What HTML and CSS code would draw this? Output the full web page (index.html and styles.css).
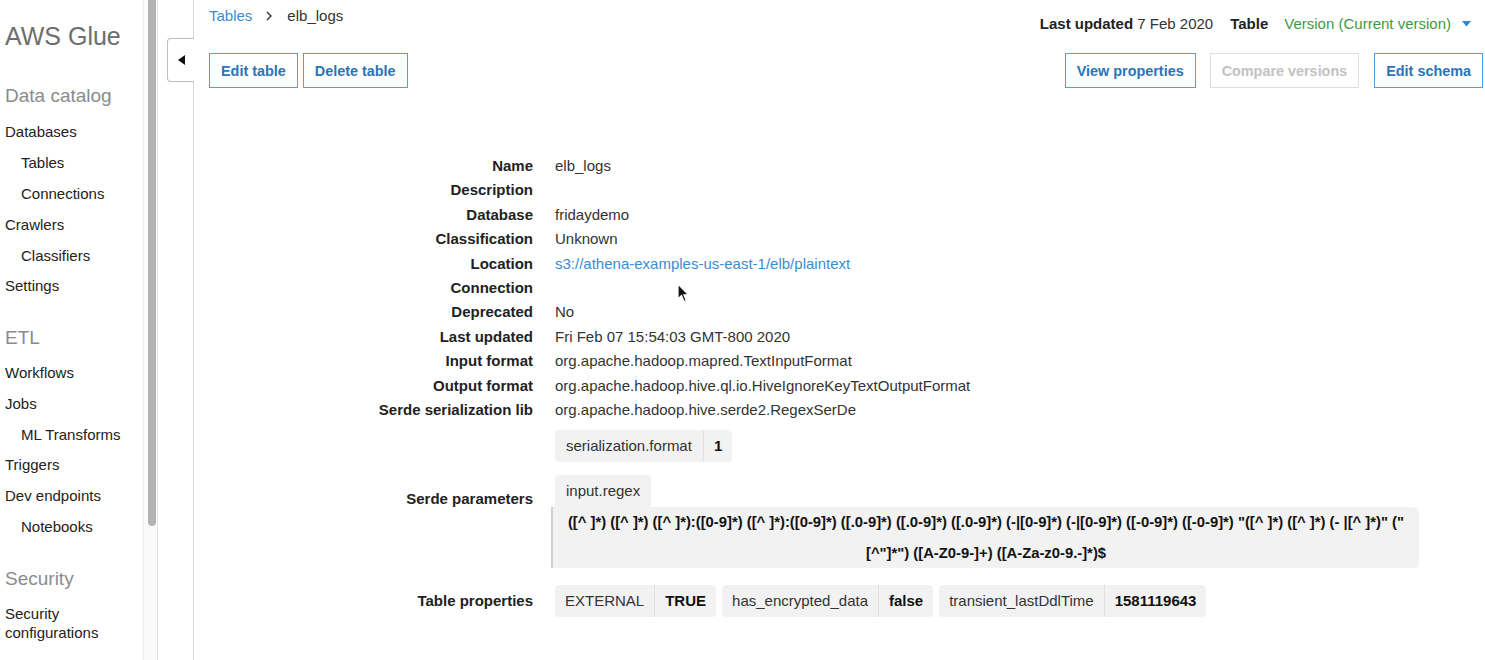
FILE: index.html
```html
<!DOCTYPE html>
<html lang="en">
<head>
<meta charset="utf-8">
<title>AWS Glue - elb_logs</title>
<link rel="stylesheet" href="styles.css">
</head>
<body>
<div class="app">
  <aside class="sidebar">
    <nav class="nav">
      <div class="brand">AWS Glue</div>
      <div class="section first">Data catalog</div>
      <a class="item">Databases</a>
      <a class="item sub">Tables</a>
      <a class="item sub">Connections</a>
      <a class="item">Crawlers</a>
      <a class="item sub">Classifiers</a>
      <a class="item">Settings</a>
      <div class="section etl">ETL</div>
      <a class="item">Workflows</a>
      <a class="item">Jobs</a>
      <a class="item sub">ML Transforms</a>
      <a class="item">Triggers</a>
      <a class="item">Dev endpoints</a>
      <a class="item sub">Notebooks</a>
      <div class="section sec">Security</div>
      <a class="item">Security configurations</a>
    </nav>
    <div class="scrollbar"><div class="thumb"></div></div>
  </aside>
  <div class="gutter">
    <button class="collapse" aria-label="Collapse">
      <svg width="8" height="10" viewBox="0 0 8 10"><path d="M7 0 L7 10 L0 5 Z" fill="#111"/></svg>
    </button>
  </div>
  <main class="main">
    <header class="top">
      <div class="crumbs">
        <a class="crumb-link">Tables</a>
        <svg class="chev" width="8" height="10" viewBox="0 0 8 10"><path d="M2 1 L6 5 L2 9" fill="none" stroke="#333" stroke-width="1.4"/></svg>
        <span class="crumb-current">elb_logs</span>
      </div>
      <div class="meta">
        <span class="meta-updated"><b>Last updated</b> 7 Feb 2020</span>
        <b class="meta-table">Table</b>
        <span class="version">Version (Current version)</span>
        <svg class="caret" width="9" height="6" viewBox="0 0 9 6"><path d="M0 0 L9 0 L4.5 5.5 Z" fill="#2f86d2"/></svg>
      </div>
    </header>
    <div class="actions">
      <div class="btn-group left">
        <button class="btn">Edit table</button>
        <button class="btn">Delete table</button>
      </div>
      <div class="btn-group right">
        <button class="btn">View properties</button>
        <button class="btn disabled">Compare versions</button>
        <button class="btn">Edit schema</button>
      </div>
    </div>
    <dl class="details">
      <dt>Name</dt><dd>elb_logs</dd>
      <dt>Description</dt><dd></dd>
      <dt>Database</dt><dd>fridaydemo</dd>
      <dt>Classification</dt><dd>Unknown</dd>
      <dt>Location</dt><dd><a class="link">s3://athena-examples-us-east-1/elb/plaintext</a></dd>
      <dt>Connection</dt><dd></dd>
      <dt>Deprecated</dt><dd>No</dd>
      <dt>Last updated</dt><dd>Fri Feb 07 15:54:03 GMT-800 2020</dd>
      <dt>Input format</dt><dd>org.apache.hadoop.mapred.TextInputFormat</dd>
      <dt>Output format</dt><dd>org.apache.hadoop.hive.ql.io.HiveIgnoreKeyTextOutputFormat</dd>
      <dt>Serde serialization lib</dt><dd>org.apache.hadoop.hive.serde2.RegexSerDe</dd>
      <dt class="params-label">Serde parameters</dt>
      <dd class="params">
        <div class="chips"><span class="chip"><span class="k">serialization.format</span><span class="v">1</span></span></div>
        <div class="regex-param">
          <span class="regex-key">input.regex</span>
          <div class="regex-val">([^ ]*) ([^ ]*) ([^ ]*):([0-9]*) ([^ ]*):([0-9]*) ([.0-9]*) ([.0-9]*) ([.0-9]*) (-|[0-9]*) (-|[0-9]*) ([-0-9]*) ([-0-9]*) "([^ ]*) ([^ ]*) (- |[^ ]*)" ("<br>[^"]*") ([A-Z0-9-]+) ([A-Za-z0-9.-]*)$</div>
        </div>
      </dd>
      <dt class="props-label">Table properties</dt>
      <dd class="props">
        <div class="chips">
          <span class="chip"><span class="k">EXTERNAL</span><span class="v">TRUE</span></span>
          <span class="chip"><span class="k">has_encrypted_data</span><span class="v">false</span></span>
          <span class="chip"><span class="k">transient_lastDdlTime</span><span class="v">1581119643</span></span>
        </div>
      </dd>
    </dl>
    <svg class="cursor" width="13" height="20" viewBox="0 0 13 20"><path d="M1 1 L1 16 L4.5 12.5 L7 18.5 L9.3 17.5 L6.8 11.8 L11.5 11.8 Z" fill="#111" stroke="#fff" stroke-width="1.2" stroke-linejoin="round"/></svg>
  </main>
</div>
</body>
</html>
```

FILE: styles.css
```css
* { box-sizing: border-box; }
html, body { margin: 0; padding: 0; }
body {
  font-family: "Liberation Sans", Arial, Helvetica, sans-serif;
  color: #333;
  background: #fff;
  overflow: hidden;
}
a { cursor: pointer; }
button { font-family: inherit; }

.app {
  display: flex;
  height: 660px;
  overflow: hidden;
}

/* Sidebar */
.sidebar {
  display: flex;
  flex: 0 0 158px;
  height: 100%;
}
.nav {
  width: 143px;
  padding: 20px 0 0 5px;
  display: flex;
  flex-direction: column;
}
.brand {
  font-size: 25px;
  line-height: 32px;
  color: #6e6e6e;
}
.section {
  font-size: 19px;
  line-height: 24px;
  color: #8b8b8b;
  margin: 24.5px 0 8.5px;
}
.section.first { margin-top: 32px; }
.section.etl { margin-bottom: 7.5px; }
.section.sec { margin-top: 25px; margin-bottom: 7.5px; }
.item {
  font-size: 15px;
  line-height: 19px;
  padding: 5.9px 0;
  color: #222;
}
.item.sub { padding-left: 16px; }

.scrollbar {
  width: 15px;
  height: 100%;
  border-left: 1px solid #ececec;
  border-right: 1px solid #e4e4e4;
  padding: 0 1px 0 4px;
  background: #fafafa;
}
.thumb {
  width: 8px;
  height: 526px;
  background: #b3b3b3;
  border-radius: 0 0 4px 4px;
}

/* Gutter with collapse tab */
.gutter {
  flex: 0 0 36px;
  border-right: 1px solid #d6d6d6;
  padding-top: 38px;
  display: flex;
  justify-content: flex-end;
}
.collapse {
  width: 27px;
  height: 44px;
  margin-right: -1px;
  background: #fff;
  border: 1px solid #bdbdbd;
  border-right: none;
  border-radius: 4px 0 0 4px;
  padding: 0 0 0 10px;
  display: flex;
  align-items: center;
}

/* Main */
.main {
  position: relative;
  flex: 1;
  padding: 0 2px 0 15px;
}
.top {
  display: flex;
  justify-content: space-between;
  align-items: flex-start;
  height: 34px;
}
.crumbs {
  padding-top: 6px;
  font-size: 15px;
  line-height: 20px;
  display: flex;
  align-items: center;
}
.crumb-link { color: #3d8ccd; }
.chev { margin: 0 14px 0 13px; }
.crumb-current { color: #333; }
.meta {
  padding-top: 14px;
  margin-right: 12px;
  font-size: 15px;
  line-height: 20px;
  color: #333;
  display: flex;
  align-items: center;
}
.meta b { color: #222; }
.meta-table { margin-left: 17px; }
.version { color: #3c9a45; margin-left: 16px; }
.caret { margin-left: 11px; }

.actions {
  margin-top: 19px;
  display: flex;
  justify-content: space-between;
}
.btn-group { display: flex; }
.btn-group.left { gap: 5px; }
.btn-group.right { gap: 15px; }
.btn-group.right .btn.disabled { margin-left: -1px; }
.btn {
  height: 35px;
  padding: 0 11px;
  background: #fff;
  border: 1px solid #5a9ed8;
  color: #2a74b8;
  font-size: 14.4px;
  font-weight: 700;
  border-radius: 0;
}
.btn.disabled {
  border-color: #dedede;
  color: #c2c2c2;
}

/* Details */
.details {
  margin: 66px 0 0;
  display: grid;
  grid-template-columns: 324px 1fr;
  column-gap: 22px;
  font-size: 15px;
  line-height: 24.4px;
}
.details dt {
  text-align: right;
  font-weight: 700;
  color: #222;
  white-space: nowrap;
}
.details dd {
  margin: 0;
  color: #333;
  min-height: 24.4px;
}
.link { color: #3a8dd1; }

.params-label, .props-label {
  align-self: center;
}
.params { padding-top: 8px; }
.props { padding-top: 17px; }
.params-label { margin-top: 8px; }
.props-label { margin-top: 17px; }

.chips {
  display: flex;
  gap: 6px;
}
.chip {
  display: flex;
  background: #f2f2f2;
  border-radius: 4px;
  line-height: 32px;
  font-size: 15px;
}
.chip .k {
  padding: 0 11px;
  color: #333;
  border-right: 1px solid #e0e0e0;
}
.chip .v {
  padding: 0 10px;
  color: #111;
  font-weight: 700;
}
.props .chip .k { padding: 0 10px; }

.regex-param {
  margin-top: 13px;
  display: flex;
  flex-direction: column;
  align-items: flex-start;
}
.regex-key {
  background: #f2f2f2;
  border-radius: 4px 4px 0 0;
  padding: 0 11px;
  line-height: 32px;
  color: #333;
}
.regex-val {
  margin-left: -4px;
  width: 868px;
  background: #f2f2f2;
  border-left: 2px solid #cfcfcf;
  border-radius: 0 6px 6px 0;
  text-align: center;
  font-size: 14.8px;
  font-weight: 700;
  color: #111;
  line-height: 30.5px;
  white-space: nowrap;
}

.cursor {
  position: absolute;
  left: 483px;
  top: 283px;
}
```
